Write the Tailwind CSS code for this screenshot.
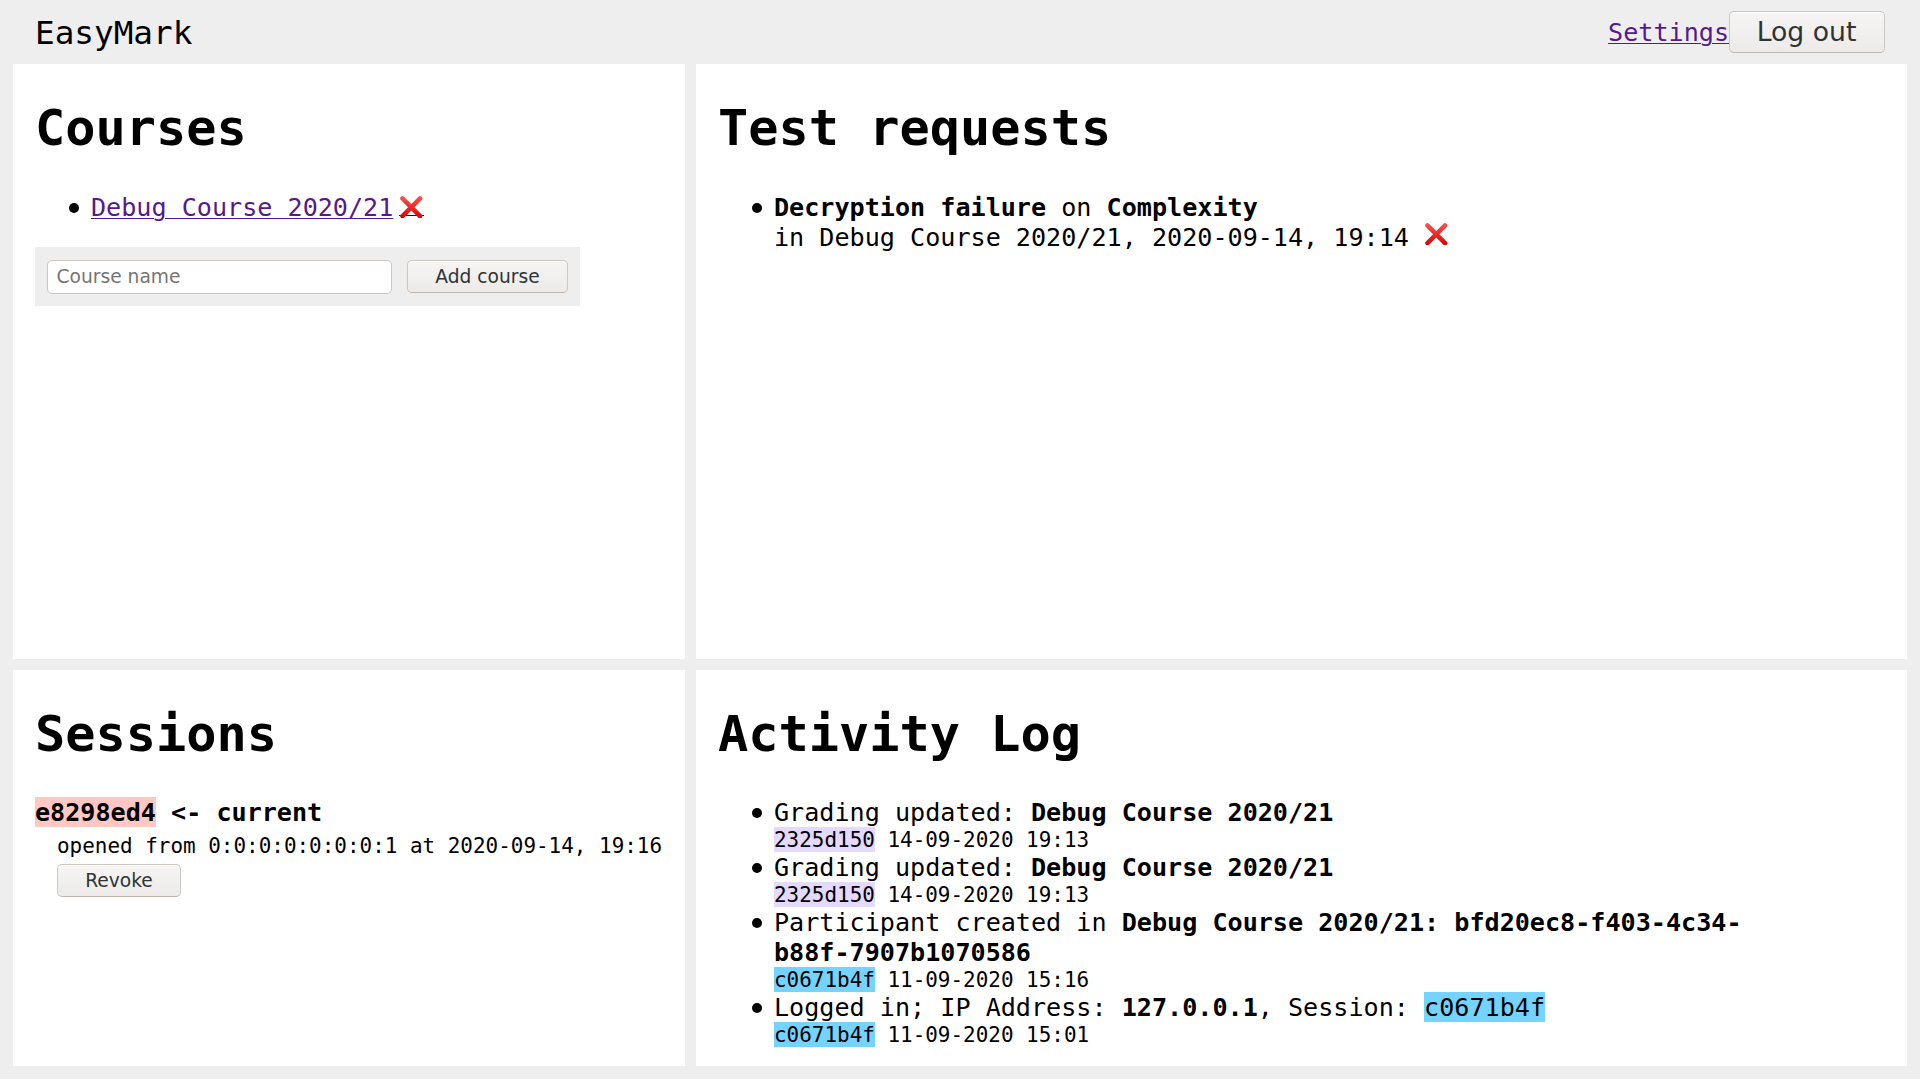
<!DOCTYPE html>
<html lang="en">
<head>
<meta charset="utf-8">
<title>EasyMark</title>
<script src="https://cdn.jsdelivr.net/npm/@tailwindcss/browser@4"></script>
</head>
<body class="h-[1079px] overflow-hidden bg-[#eee] font-['DejaVu_Sans_Mono',monospace] text-[25.12px] leading-[32px] text-black">
<header class="flex h-16 items-center justify-between px-[35px]">
  <div class="pt-[2px] text-[32.66px] leading-[38px]">EasyMark</div>
  <nav class="flex items-center">
    <a href="#" class="pt-[2px] text-[#551a8b] underline decoration-1 underline-offset-2">Settings</a>
    <button class="h-[42px] w-[156px] rounded-[5px] border border-[#cdc7c2] border-b-[#bfb8b1] bg-linear-to-b from-[#f6f5f4] to-[#edebe9] pr-[1px] font-['DejaVu_Sans',sans-serif] text-[26.67px] leading-[38px] text-[#2e3436] shadow-[inset_0_1px_white]">Log out</button>
  </nav>
</header>
<main class="mx-[13px] grid grid-cols-[672px_1211px] grid-rows-[595px_396px] gap-[11px]">
  <section class="bg-white px-[22px] pt-[34px]">
    <h1 class="text-[50.24px] font-bold leading-[60px]">Courses</h1>
    <ul class="mt-[34px]">
      <li class="flex h-[30px] pl-[33.5px]"><span class="mt-[11px] mr-[12.5px] size-[10px] shrink-0 rounded-full bg-black"></span><a href="#" class="text-[#551a8b] underline decoration-1 underline-offset-2">Debug Course 2020/21</a><a href="#" class="ml-[6px] flex h-6 w-[25px] border-b border-[#0000ee] pt-[3.5px] pl-[1px]"><svg class="size-[22.5px] shrink-0" viewBox="0 0 23 23" fill="none"><defs><linearGradient id="red" x1="0" y1="0" x2="0" y2="23" gradientUnits="userSpaceOnUse"><stop offset="0" stop-color="#ff5450"/><stop offset="1" stop-color="#d90000"/></linearGradient></defs><path d="M2.5 2.5 20.5 20.5M20.5 2.5 2.5 20.5" stroke="url(#red)" stroke-width="4.6" stroke-linecap="round"/></svg></a></li>
    </ul>
    <form class="mt-[25px] flex h-[59px] w-[545px] bg-[#eee] pl-3 pt-[13px] font-['DejaVu_Sans',sans-serif] text-[18.67px]">
      <input placeholder="Course name" class="h-[34px] w-[345px] rounded-[5px] border border-[#cdc7c2] bg-white pb-[2px] pl-[8.5px] placeholder:text-[#757575]">
      <button type="button" class="ml-[15px] h-[33px] w-[161px] rounded-[5px] border border-[#cdc7c2] border-b-[#bfb8b1] bg-linear-to-b from-[#f6f5f4] to-[#edebe9] leading-[30px] text-[#2e3436] shadow-[inset_0_1px_white]">Add course</button>
    </form>
  </section>
  <section class="bg-white px-[22px] pt-[34px]">
    <h1 class="text-[50.24px] font-bold leading-[60px]">Test requests</h1>
    <ul class="mt-[34px]">
      <li class="flex pl-[33.5px]"><span class="mt-[11px] mr-[12.5px] size-[10px] shrink-0 rounded-full bg-black"></span>
        <div><div class="h-[30px]"><b>Decryption failure</b> on <b>Complexity</b></div><div class="flex h-[30px]">in Debug Course 2020/21, 2020-09-14, 19:14<svg class="ml-[16.5px] mt-[0.5px] size-[22.5px]" viewBox="0 0 23 23" fill="none"><path d="M2.5 2.5 20.5 20.5M20.5 2.5 2.5 20.5" stroke="url(#red)" stroke-width="4.6" stroke-linecap="round"/></svg></div></div></li>
    </ul>
  </section>
  <section class="bg-white px-[22px] pt-[34px]">
    <h1 class="text-[50.24px] font-bold leading-[60px]">Sessions</h1>
    <div class="mt-[33px] flex h-[30px] whitespace-pre font-bold"><span class="bg-[#ffc8c3]">e8298ed4</span><span> &lt;- current</span></div>
    <div class="pl-[22px]">
      <div class="mt-[6px] h-[25px] whitespace-nowrap text-[20.95px] leading-[27px]">opened from 0:0:0:0:0:0:0:1 at 2020-09-14, 19:16</div>
      <button class="mt-[6px] block h-[33px] w-[124px] rounded-[5px] border border-[#cdc7c2] border-b-[#bfb8b1] bg-linear-to-b from-[#f6f5f4] to-[#edebe9] font-['DejaVu_Sans',sans-serif] text-[18.67px] leading-[30px] text-[#2e3436] shadow-[inset_0_1px_white]">Revoke</button>
    </div>
  </section>
  <section class="bg-white px-[22px] pt-[34px]">
    <h1 class="text-[50.24px] font-bold leading-[60px]">Activity Log</h1>
    <ul class="mt-[33px]">
      <li class="flex pl-[33.5px]"><span class="mt-[11px] mr-[12.5px] size-[10px] shrink-0 rounded-full bg-black"></span>
        <div><div class="h-[30px]">Grading updated: <b>Debug Course 2020/21</b></div><div class="flex h-[25px] text-[20.95px] leading-[27px]"><span class="bg-[#e4d9ff]">2325d150</span><span class="whitespace-pre"> 14-09-2020 19:13</span></div></div></li>
      <li class="flex pl-[33.5px]"><span class="mt-[11px] mr-[12.5px] size-[10px] shrink-0 rounded-full bg-black"></span>
        <div><div class="h-[30px]">Grading updated: <b>Debug Course 2020/21</b></div><div class="flex h-[25px] text-[20.95px] leading-[27px]"><span class="bg-[#e4d9ff]">2325d150</span><span class="whitespace-pre"> 14-09-2020 19:13</span></div></div></li>
      <li class="flex pl-[33.5px]"><span class="mt-[11px] mr-[12.5px] size-[10px] shrink-0 rounded-full bg-black"></span>
        <div><div class="h-[30px]">Participant created in <b>Debug Course 2020/21: bfd20ec8-f403-4c34-</b></div><div class="h-[30px] font-bold">b88f-7907b1070586</div><div class="flex h-[25px] text-[20.95px] leading-[27px]"><span class="bg-[#75d3ff]">c0671b4f</span><span class="whitespace-pre"> 11-09-2020 15:16</span></div></div></li>
      <li class="flex pl-[33.5px]"><span class="mt-[11px] mr-[12.5px] size-[10px] shrink-0 rounded-full bg-black"></span>
        <div><div class="flex h-[30px] whitespace-pre"><span>Logged in; IP Address: <b>127.0.0.1</b>, Session: </span><span class="bg-[#75d3ff]">c0671b4f</span></div><div class="flex h-[25px] text-[20.95px] leading-[27px]"><span class="bg-[#75d3ff]">c0671b4f</span><span class="whitespace-pre"> 11-09-2020 15:01</span></div></div></li>
    </ul>
  </section>
</main>
</body>
</html>
